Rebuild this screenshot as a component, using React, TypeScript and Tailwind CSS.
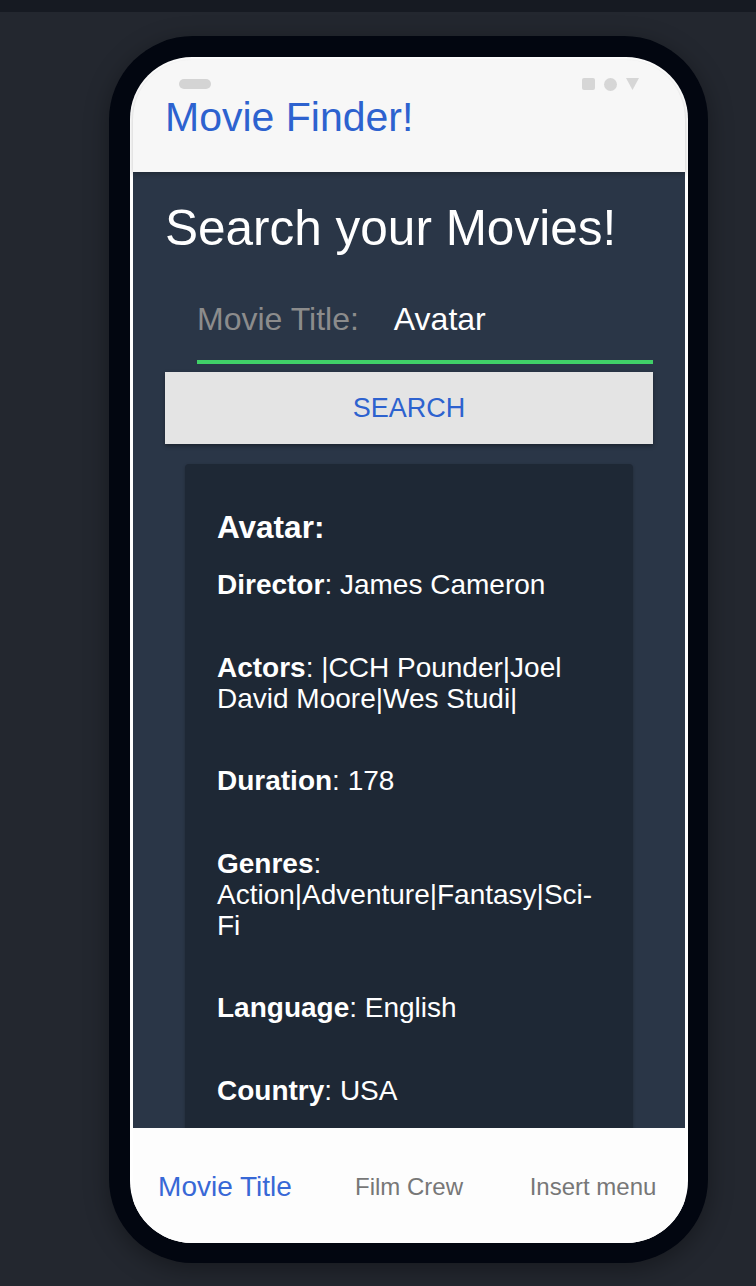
import React from 'react';

const font = { fontFamily: '"Liberation Sans", Arial, sans-serif' };

// keep the pipe-separated lists from breaking after each "|"
const noPipeBreak = (s: string) => s.split('|').join('|\u2060');

interface Movie {
  title: string;
  director: string;
  actors: string;
  duration: number;
  genres: string;
  language: string;
  country: string;
}

const movie: Movie = {
  title: 'Avatar',
  director: 'James Cameron',
  actors: '|CCH Pounder|Joel David Moore|Wes Studi|',
  duration: 178,
  genres: 'Action|Adventure|Fantasy|Sci-Fi',
  language: 'English',
  country: 'USA',
};

const Field: React.FC<{ label: string; value: string | number }> = ({ label, value }) => (
  <p className="text-[28px] leading-[31px] text-white">
    <b>{label}</b>: {noPipeBreak(String(value))}
  </p>
);

const StatusBar = () => (
  <div className="flex h-[12px] items-center justify-between px-[46px]">
    <div className="h-[10px] w-[32px] rounded-full bg-[#d4d4d4]" />
    <div className="flex items-center gap-[9px]">
      <div className="h-[12px] w-[13px] rounded-[2px] bg-[#d6d6d6]" />
      <div className="h-[13px] w-[13px] rounded-full bg-[#d6d6d6]" />
      <svg width="13" height="12" viewBox="0 0 13 12">
        <path d="M0 0 H13 L6.5 12 Z" fill="#d6d6d6" />
      </svg>
    </div>
  </div>
);

const MovieCard: React.FC<{ item: Movie }> = ({ item }) => (
  <div className="mx-[20px] mt-[20px] rounded-[4px] bg-[#1e2835] pt-[46px] pr-[30px] pb-10 pl-[32px] shadow-[0_1px_3px_rgba(0,0,0,0.25)]">
    <h3 className="text-[31.5px] font-bold leading-[34px] text-white">{item.title}:</h3>
    <div className="mt-[25px] flex flex-col gap-[51.5px]">
      <Field label="Director" value={item.director} />
      <Field label="Actors" value={item.actors} />
      <Field label="Duration" value={item.duration} />
      <Field label="Genres" value={item.genres} />
      <Field label="Language" value={item.language} />
      <Field label="Country" value={item.country} />
    </div>
  </div>
);

export default function App() {
  return (
    <div className="min-h-[1286px] bg-[#23272f]" style={font}>
      <div className="h-[12px] bg-[#161a22]" />
      <div className="pt-[24px] pl-[109px]">
        <div className="w-[599px] rounded-[84px] bg-[#020610] pt-[21px] pr-[20px] pb-[20px] pl-[21px] shadow-[0_6px_24px_rgba(0,0,0,0.35)]">
          <div className="overflow-hidden rounded-[62px] bg-white px-[3px] pt-[3px]">
            {/* header */}
            <div className="relative z-10 h-[112px] rounded-t-[59px] bg-[#f7f7f7] pt-[18px] shadow-[0_2px_5px_rgba(0,0,0,0.25)]">
              <StatusBar />
              <h1 className="mt-[4px] pl-[32px] text-[41px] leading-[46px] text-[#2d62cf]">Movie Finder!</h1>
            </div>

            {/* search area */}
            <div className="h-[956px] overflow-hidden bg-[#2a3647] px-[32px] pt-[28px]">
              <h2 className="text-[49.5px] leading-[56px] text-white">Search your Movies!</h2>
              <div className="mt-[24px] ml-[32px] flex items-center gap-[35px] border-b-4 border-[#40d068] pt-[21px] pb-[23px] text-[32px] leading-[36px]">
                <span className="text-[#8c8c8c]">Movie Title:</span>
                <span className="text-white">Avatar</span>
              </div>
              <button className="mt-[8px] flex h-[72px] w-full items-center justify-center bg-[#e4e4e4] text-[27px] text-[#2d62cf] shadow-[0_2px_4px_rgba(0,0,0,0.35)]">
                SEARCH
              </button>
              <MovieCard item={movie} />
            </div>

            {/* tab bar */}
            <div className="grid h-[115px] grid-cols-3 items-center bg-[#fdfdfd] pt-[3px]">
              <span className="text-center text-[28px] text-[#3868d6]">Movie Title</span>
              <span className="text-center text-[24px] text-[#777777]">Film Crew</span>
              <span className="text-center text-[24px] text-[#777777]">Insert menu</span>
            </div>
          </div>
        </div>
      </div>
    </div>
  );
}
